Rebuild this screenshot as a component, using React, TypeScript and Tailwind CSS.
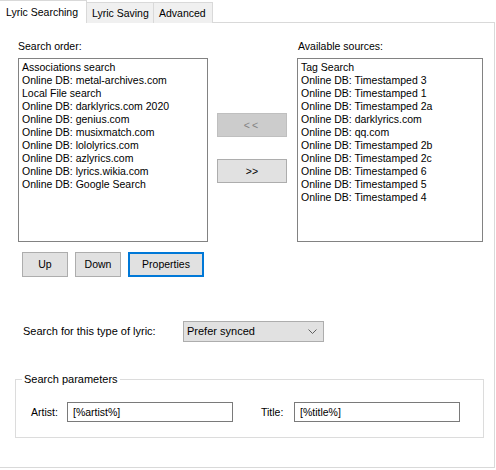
import React from 'react';

const searchOrder = [
  'Associations search',
  'Online DB: metal-archives.com',
  'Local File search',
  'Online DB: darklyrics.com 2020',
  'Online DB: genius.com',
  'Online DB: musixmatch.com',
  'Online DB: lololyrics.com',
  'Online DB: azlyrics.com',
  'Online DB: lyrics.wikia.com',
  'Online DB: Google Search',
];

const available = [
  'Tag Search',
  'Online DB: Timestamped 3',
  'Online DB: Timestamped 1',
  'Online DB: Timestamped 2a',
  'Online DB: darklyrics.com',
  'Online DB: qq.com',
  'Online DB: Timestamped 2b',
  'Online DB: Timestamped 2c',
  'Online DB: Timestamped 6',
  'Online DB: Timestamped 5',
  'Online DB: Timestamped 4',
];

const ListBox = ({ items, width }: { items: string[]; width: string }) => (
  <div className={`${width} h-[184px] border border-[#828282] bg-white pl-[3px] pt-[2px]`}>
    {items.map((it) => (
      <div key={it} className="h-[13px] leading-[13px] whitespace-nowrap">
        {it}
      </div>
    ))}
  </div>
);

export default function App() {
  return (
    <div
      className="w-[496px] h-[470px] bg-white text-black text-[10.5px] leading-[13px] overflow-hidden"
      style={{ fontFamily: '"Liberation Sans", Arial, sans-serif' }}
    >
      {/* tab strip */}
      <div className="flex items-end h-[23px] relative">
        <div className="h-[23px] w-[87px] border-r border-t border-[#d9d9d9] bg-white pl-[6px] pt-[5px] text-[10.5px] relative z-10">
          Lyric Searching
        </div>
        <div className="h-[21px] w-[67px] border-t border-r border-[#d9d9d9] bg-[#f0f0f0] pl-[5px] pt-[4px]">
          Lyric Saving
        </div>
        <div className="h-[21px] w-[59px] border-t border-r border-[#d9d9d9] bg-[#f0f0f0] pl-[5px] pt-[4px]">
          Advanced
        </div>
      </div>

      {/* tab panel */}
      <div className="w-[495px] h-[446px] -mt-px border-r border-b border-t border-[#d9d9d9] pl-[18px] pt-[17px]">
        <div className="flex">
          <div className="flex flex-col">
            <div className="h-[13px] mb-[5px]">Search order:</div>
            <ListBox items={searchOrder} width="w-[190px]" />
          </div>
          <div className="flex flex-col ml-[9px] pt-[73px] gap-[22px]">
            <div className="w-[70px] h-[24px] border border-[#bfbfbf] bg-[#cccccc] text-[#838383] flex items-center justify-center tracking-[2px]">
              &lt;&lt;
            </div>
            <div className="w-[70px] h-[24px] border border-[#adadad] bg-[#e1e1e1] flex items-center justify-center">
              &gt;&gt;
            </div>
          </div>
          <div className="flex flex-col ml-[10px]">
            <div className="h-[13px] mb-[5px] pl-px">Available sources:</div>
            <ListBox items={available} width="w-[186px]" />
          </div>
        </div>

        {/* list buttons */}
        <div className="flex mt-[10px] ml-[4px] gap-[7px]">
          <div className="w-[46px] h-[25px] border border-[#adadad] bg-[#e1e1e1] flex items-center justify-center">
            Up
          </div>
          <div className="w-[46px] h-[25px] border border-[#adadad] bg-[#e1e1e1] flex items-center justify-center">
            Down
          </div>
          <div className="w-[76px] h-[25px] border-2 border-[#0078d7] bg-[#e1e1e1] flex items-center justify-center">
            Properties
          </div>
        </div>

        {/* lyric type */}
        <div className="flex items-center mt-[44px] ml-[5px]">
          <div className="w-[160px] text-[11px]">Search for this type of lyric:</div>
          <div className="w-[141px] h-[21px] border border-[#adadad] bg-[#e1e1e1] flex items-center justify-between pl-[3px] pr-[6px] text-[11px]">
            <span>Prefer synced</span>
            <svg width="9" height="6" viewBox="0 0 9 6" fill="none">
              <path d="M0.5 0.5 L4.5 4.5 L8.5 0.5" stroke="#606060" strokeWidth="1" />
            </svg>
          </div>
        </div>

        {/* search parameters group */}
        <div className="relative mt-[37px] -ml-[3px] w-[469px] h-[59px] border border-[#dcdcdc]">
          <div className="absolute -top-[7px] left-[6px] bg-white px-[2px] h-[13px] text-[11px]">Search parameters</div>
          <div className="flex items-center mt-[22px] ml-[15px]">
            <span className="w-[36px]">Artist:</span>
            <div className="w-[166px] h-[20px] border border-[#7a7a7a] pl-[5px] flex items-center">[%artist%]</div>
            <span className="ml-[28px] w-[33px]">Title:</span>
            <div className="w-[166px] h-[20px] border border-[#7a7a7a] pl-[5px] flex items-center">[%title%]</div>
          </div>
        </div>
      </div>
    </div>
  );
}
